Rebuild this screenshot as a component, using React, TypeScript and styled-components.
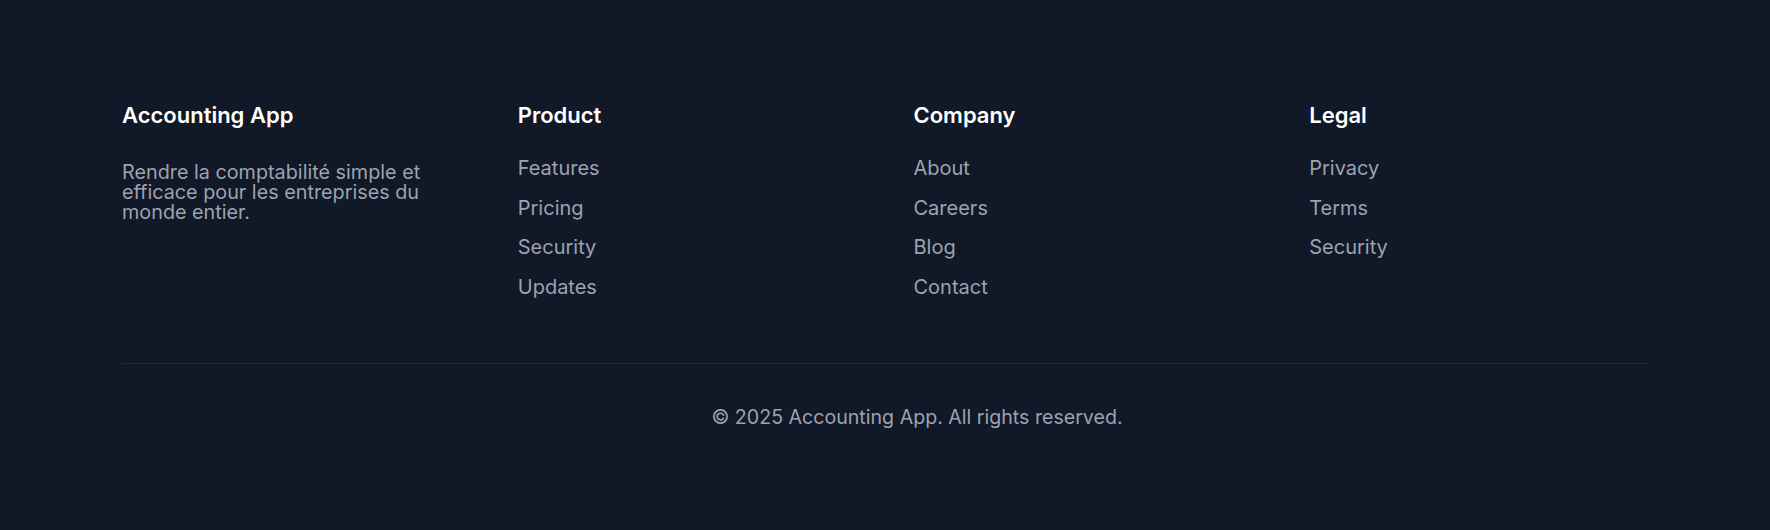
import React from "react";
import styled, { createGlobalStyle } from "styled-components";

const GlobalStyle = createGlobalStyle`
  html, body {
    margin: 0;
    padding: 0;
    background: #111827;
  }
  body {
    font-family: Inter, "Noto Sans", sans-serif;
    -webkit-font-smoothing: antialiased;
  }
`;

const Footer = styled.footer`
  background: #111827;
  min-height: 530px;
  box-sizing: border-box;
  padding: 101px 122px 0 122px;
`;

const Grid = styled.div`
  display: grid;
  grid-template-columns: repeat(4, 1fr);
  column-gap: 57px;
`;

const Column = styled.div`
  display: flex;
  flex-direction: column;
`;

const Heading = styled.h3`
  margin: 0;
  font-size: 22px;
  line-height: 28px;
  font-weight: 600;
  color: #ffffff;
`;

const Tagline = styled.p`
  margin: 33px 0 0;
  font-size: 19.8px;
  line-height: 20px;
  color: #9ca3af;
`;

const LinkList = styled.ul`
  list-style: none;
  margin: 25px 0 0;
  padding: 0;
  display: flex;
  flex-direction: column;
  gap: 11.5px;
`;

const LinkItem = styled.li`
  font-size: 20px;
  line-height: 28px;
`;

const FooterLink = styled.a`
  color: #9ca3af;
  text-decoration: none;
`;

const Divider = styled.div`
  margin-top: 62px;
  height: 1px;
  background: #1f2937;
`;

const Copyright = styled.p`
  margin: 39px 0 0;
  padding-left: 64px;
  text-align: center;
  font-size: 19.6px;
  line-height: 28px;
  color: #9ca3af;
`;

const columns: { title: string; links: string[] }[] = [
  { title: "Product", links: ["Features", "Pricing", "Security", "Updates"] },
  { title: "Company", links: ["About", "Careers", "Blog", "Contact"] },
  { title: "Legal", links: ["Privacy", "Terms", "Security"] },
];

export default function App() {
  return (
    <>
      <GlobalStyle />
      <Footer>
        <Grid>
          <Column>
            <Heading>Accounting App</Heading>
            <Tagline>
              Rendre la comptabilité simple et efficace pour les entreprises du
              monde entier.
            </Tagline>
          </Column>
          {columns.map((col) => (
            <Column key={col.title}>
              <Heading>{col.title}</Heading>
              <LinkList>
                {col.links.map((l) => (
                  <LinkItem key={l}>
                    <FooterLink href="#">{l}</FooterLink>
                  </LinkItem>
                ))}
              </LinkList>
            </Column>
          ))}
        </Grid>
        <Divider />
        <Copyright>© 2025 Accounting App. All rights reserved.</Copyright>
      </Footer>
    </>
  );
}
